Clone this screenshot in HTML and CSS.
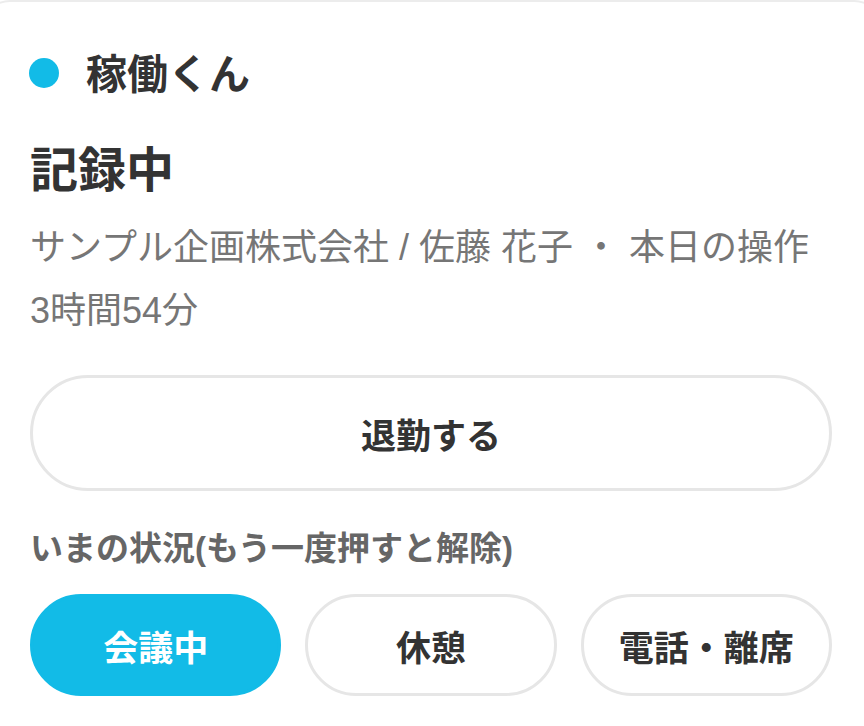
FILE: index.html
```html
<!DOCTYPE html>
<html lang="ja">
<head>
<meta charset="utf-8">
<title>稼働くん</title>
<link rel="stylesheet" href="styles.css">
</head>
<body>
<div class="card">
  <div class="brand">
    <span class="dot"></span>
    <span class="brand-name">稼働くん</span>
  </div>
  <h1 class="status">記録中</h1>
  <p class="meta">サンプル企画株式会社 / 佐藤 花子 ・ 本日の操作<span class="nowrap">3時間54分</span></p>
  <button class="btn-main">退勤する</button>
  <div class="label">いまの状況(もう一度押すと解除)</div>
  <div class="choices">
    <button class="chip chip-active">会議中</button>
    <button class="chip">休憩</button>
    <button class="chip">電話・離席</button>
  </div>
</div>
</body>
</html>
```
FILE: styles.css
```css
html, body {
  margin: 0;
  padding: 0;
  background: #ffffff;
  overflow: hidden;
}
body {
  font-family: "Liberation Sans", "Noto Sans CJK JP", sans-serif;
  color: #333333;
}
.card {
  margin: 0 -20px;
  border: 2px solid #ececec;
  border-bottom: 0;
  border-radius: 30px 30px 0 0;
  padding: 41px 50px 0 48px;
  min-height: 100vh;
  box-sizing: border-box;
}
.brand {
  display: flex;
  align-items: center;
  height: 60px;
}
.dot {
  width: 30px;
  height: 30px;
  border-radius: 50%;
  background: #12bbe7;
  margin-left: -1px;
  margin-right: 27px;
  flex: none;
}
.brand-name {
  font-size: 41px;
  font-weight: 700;
  line-height: 60px;
  color: #333333;
  margin-top: 4px;
}
.status {
  margin: 33px 0 0 0;
  font-size: 48px;
  font-weight: 700;
  line-height: 69px;
  color: #333333;
}
.meta {
  margin: 11px 0 0 0;
  font-size: 36px;
  line-height: 63px;
  color: #767676;
}
.nowrap {
  white-space: nowrap;
}
.btn-main {
  display: block;
  width: 100%;
  height: 116px;
  margin-top: 33px;
  border: 3px solid #e6e6e6;
  border-radius: 58px;
  background: #ffffff;
  font-family: inherit;
  font-size: 35px;
  font-weight: 700;
  color: #333333;
  cursor: pointer;
}
.label {
  margin-top: 35px;
  font-size: 33px;
  font-weight: 700;
  line-height: 46px;
  color: #666666;
}
.choices {
  display: grid;
  grid-template-columns: repeat(3, 1fr);
  gap: 24px;
  margin-top: 22px;
}
.chip {
  height: 102px;
  border: 3px solid #e6e6e6;
  border-radius: 51px;
  background: #ffffff;
  font-family: inherit;
  font-size: 35px;
  font-weight: 700;
  color: #333333;
  cursor: pointer;
}
.chip-active {
  background: #12bbe7;
  border-color: #12bbe7;
  color: #ffffff;
}
```
